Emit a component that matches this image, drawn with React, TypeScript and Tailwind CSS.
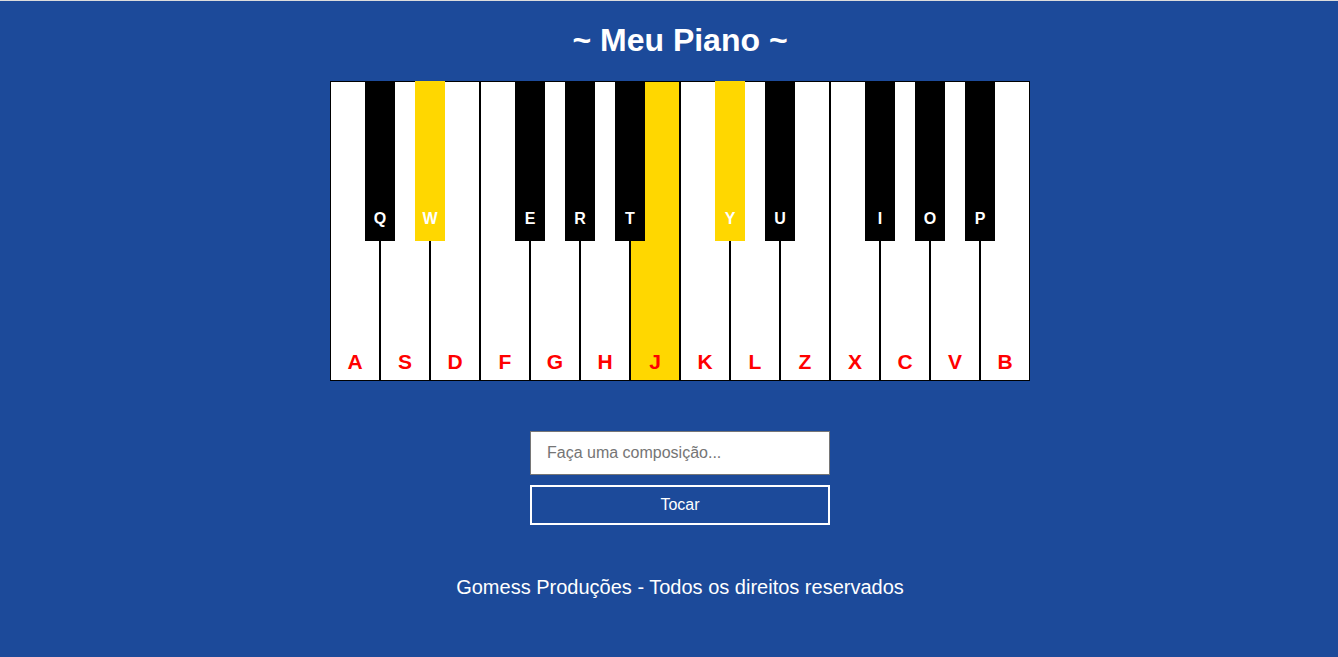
import React, { useState } from 'react';

const whiteKeys = ['A', 'S', 'D', 'F', 'G', 'H', 'J', 'K', 'L', 'Z', 'X', 'C', 'V', 'B'];

// left offset of each black key from the piano's left edge
const blackKeys = [
  { key: 'Q', left: 'left-[35px]' },
  { key: 'W', left: 'left-[85px]' },
  { key: 'E', left: 'left-[185px]' },
  { key: 'R', left: 'left-[235px]' },
  { key: 'T', left: 'left-[285px]' },
  { key: 'Y', left: 'left-[385px]' },
  { key: 'U', left: 'left-[435px]' },
  { key: 'I', left: 'left-[535px]' },
  { key: 'O', left: 'left-[585px]' },
  { key: 'P', left: 'left-[635px]' },
];

const active = ['W', 'J', 'Y'];

export default function App() {
  const [song, setSong] = useState('');

  return (
    <div className="min-h-[657px] bg-[#1c4a9a] border-t border-[#dcdcdc] font-['Liberation_Sans',Arial,sans-serif] text-white">
      <div className="flex flex-col items-center pl-[22px]">
        {/* Title */}
        <h1 className="mt-[19px] text-[32px] leading-[40px] font-bold">~ Meu Piano ~</h1>

        {/* Piano */}
        <div className="relative mt-[21px] flex">
          {whiteKeys.map((k) => (
            <div
              key={k}
              className={`w-[50px] h-[300px] border border-black flex items-end justify-center pb-[8px] ${
                active.includes(k) ? 'bg-[#ffd700]' : 'bg-white'
              }`}
            >
              <span className="text-[21px] leading-none font-bold text-[#ff0000]">{k}</span>
            </div>
          ))}
          {blackKeys.map((b) => (
            <div
              key={b.key}
              className={`absolute top-0 ${b.left} w-[30px] h-[160px] flex items-end justify-center pb-[14px] ${
                active.includes(b.key) ? 'bg-[#ffd700]' : 'bg-black'
              }`}
            >
              <span className="text-[16px] leading-none font-bold text-white">{b.key}</span>
            </div>
          ))}
        </div>

        {/* Composition */}
        <div className="mt-[50px] flex flex-col gap-[10px] w-[300px]">
          <input
            value={song}
            onChange={(e) => setSong(e.target.value)}
            placeholder="Faça uma composição..."
            className="h-[44px] w-full bg-white border border-[#767676] px-[16px] text-[16px] text-[#333] placeholder:text-[#757575] outline-none"
          />
          <button className="h-[40px] w-full border-2 border-white text-[16px] text-white">Tocar</button>
        </div>

        {/* Footer */}
        <p className="mt-[50px] text-[20px] leading-[24px]">Gomess Produções - Todos os direitos reservados</p>
      </div>
    </div>
  );
}
